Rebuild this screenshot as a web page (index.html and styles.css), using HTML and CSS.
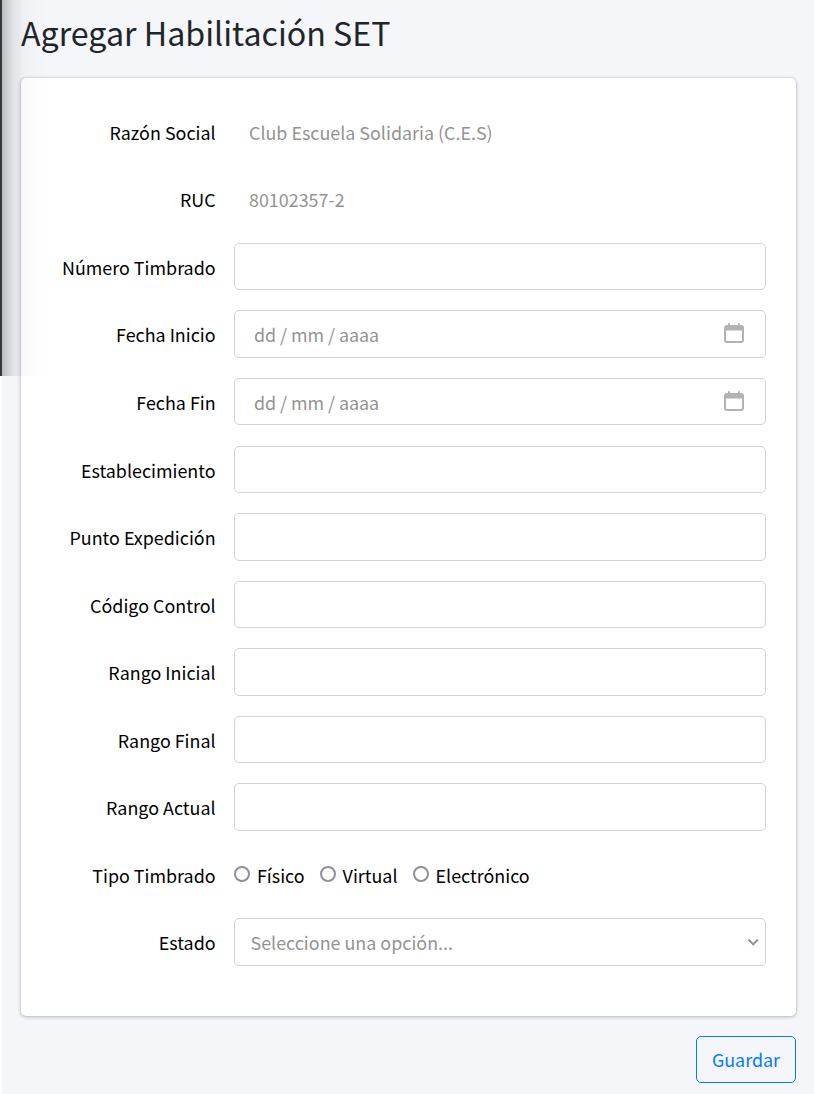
FILE: index.html
```html
<!DOCTYPE html>
<html lang="es">
<head>
<meta charset="utf-8">
<title>Agregar Habilitación SET</title>
<link rel="stylesheet" href="styles.css">
</head>
<body>
<div class="sidebar-edge"></div>
<main class="content">
  <h1 class="title"><span>Agregar Habilitación SET</span></h1>
  <form>
    <section class="card">
      <div class="row"><label class="label">Razón Social</label><div class="plain">Club Escuela Solidaria (C.E.S)</div></div>
      <div class="row"><label class="label">RUC</label><div class="plain">80102357-2</div></div>
      <div class="row"><label class="label" for="timbrado">Número Timbrado</label><input class="control" id="timbrado"></div>
      <div class="row"><label class="label">Fecha Inicio</label>
        <div class="control date"><span class="date-text">dd / mm / aaaa</span>
          <svg class="calendar" viewBox="0 0 20 20"><path d="M3 2h1V1a1 1 0 0 1 2 0v1h8V1a1 1 0 0 1 2 0v1h1a3 3 0 0 1 3 3v12a3 3 0 0 1-3 3H3a3 3 0 0 1-3-3V5a3 3 0 0 1 3-3zM2 7.4V17a1 1 0 0 0 1 1h14a1 1 0 0 0 1-1V7.4z"/></svg></div></div>
      <div class="row"><label class="label">Fecha Fin</label>
        <div class="control date"><span class="date-text">dd / mm / aaaa</span>
          <svg class="calendar" viewBox="0 0 20 20"><path d="M3 2h1V1a1 1 0 0 1 2 0v1h8V1a1 1 0 0 1 2 0v1h1a3 3 0 0 1 3 3v12a3 3 0 0 1-3 3H3a3 3 0 0 1-3-3V5a3 3 0 0 1 3-3zM2 7.4V17a1 1 0 0 0 1 1h14a1 1 0 0 0 1-1V7.4z"/></svg></div></div>
      <div class="row"><label class="label" for="establecimiento">Establecimiento</label><input class="control" id="establecimiento"></div>
      <div class="row"><label class="label" for="punto">Punto Expedición</label><input class="control" id="punto"></div>
      <div class="row"><label class="label" for="codigo">Código Control</label><input class="control" id="codigo"></div>
      <div class="row"><label class="label" for="inicial">Rango Inicial</label><input class="control" id="inicial"></div>
      <div class="row"><label class="label" for="final">Rango Final</label><input class="control" id="final"></div>
      <div class="row"><label class="label" for="actual">Rango Actual</label><input class="control" id="actual"></div>
      <div class="row"><span class="label">Tipo Timbrado</span>
        <div class="radios">
          <label class="radio"><input type="radio" name="tipo">Físico</label>
          <label class="radio"><input type="radio" name="tipo">Virtual</label>
          <label class="radio"><input type="radio" name="tipo">Electrónico</label>
        </div></div>
      <div class="row"><label class="label">Estado</label>
        <div class="control select"><span>Seleccione una opción...</span>
          <svg class="chevron" viewBox="0 0 12 8"><path d="M1.5 1.5L6.2 6.4l4.7-4.9"/></svg></div></div>
    </section>
    <div class="actions"><button class="save" type="button">Guardar</button></div>
  </form>
</main>
</body>
</html>
```
FILE: styles.css
```css
* { box-sizing: border-box; }
body {
  margin: 0;
  height: 1094px;
  overflow: hidden;
  background: linear-gradient(90deg, #fff 2px, #f4f6fa 2px);
  color: #000;
  font-family: "Noto Sans CJK SC", sans-serif;
  font-size: 17.9px;
}
.sidebar-edge {
  position: absolute;
  top: 0;
  left: 0;
  z-index: 1;
  width: 46px;
  height: 376px;
  pointer-events: none;
  background: linear-gradient(90deg, #343a40 2px, rgba(0,0,0,.24) 2px, rgba(0,0,0,.15) 8px, rgba(0,0,0,.07) 14px, rgba(0,0,0,.055) 19px, rgba(0,0,0,.025) 23px, rgba(0,0,0,.012) 32px, rgba(0,0,0,0) 46px);
}
.content { padding: 0 18px 0 21px; }
.title {
  display: flex;
  align-items: center;
  margin: 0;
  height: 78px;
  padding-bottom: 13px;
  color: #212529;
  font-size: 32.2px;
  font-weight: 400;
  line-height: 1;
  white-space: nowrap;
}
.card {
  height: 938px;
  padding: 29.7px 30px 0 21px;
  background: #fff;
  border-radius: 5px;
  box-shadow: 0 0 2px rgba(0,0,0,.2), 0 1px 4px rgba(0,0,0,.22);
}
.row {
  display: grid;
  grid-template-columns: 173.6px 532px;
  gap: 18.4px;
  height: 67.57px;
}
.label, .plain { line-height: 48px; white-space: nowrap; }
.label { text-align: right; }
.plain { padding-left: 15px; color: #939393; }
.control {
  width: 532px;
  height: 47.5px;
  padding: 0 16px;
  border: 1px solid #ced4da;
  border-radius: 5px;
  background: #fff;
  color: #939393;
  font: inherit;
}
.date, .select { display: flex; align-items: center; justify-content: space-between; }
.date { padding: 0 21px 0 19px; }
.date-text { letter-spacing: -.04px; }
.calendar { width: 20px; height: 20px; margin-bottom: 2px; fill: #b2b2b2; }
.select { padding: 0 6px 0 15.5px; }
.chevron { width: 12px; height: 8px; fill: none; stroke: #939393; stroke-width: 1.9; }
.radios { display: flex; align-items: center; gap: 15px; height: 48px; }
.radio { display: flex; align-items: center; gap: 7px; white-space: nowrap; }
.radio input {
  appearance: none;
  width: 16px;
  height: 16px;
  margin: 0 0 1px;
  border: 2px solid #8f8f9d;
  border-radius: 50%;
  background: #fff;
}
.actions { display: flex; justify-content: flex-end; padding: 20px 0 0; }
.save {
  width: 100px;
  height: 47px;
  padding: 0 0 2px;
  border: 1px solid #007bff;
  border-radius: 5px;
  background: transparent;
  color: #007bff;
  font: inherit;
}
```
